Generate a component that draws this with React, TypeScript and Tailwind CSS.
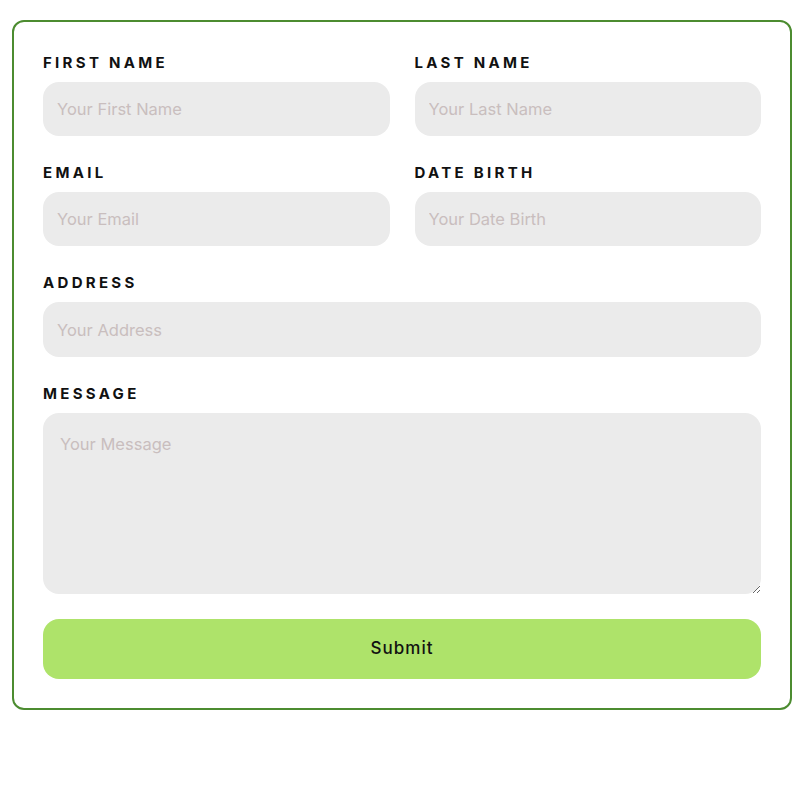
export default function App() {
  const labelCls =
    'block text-[15px] leading-5 font-bold tracking-[0.22em] uppercase text-[#111] mb-[9px]'
  const inputCls =
    'w-full h-[54px] rounded-2xl bg-[#ebebeb] px-[14px] text-[16.5px] text-[#333] outline-none placeholder:text-[#c9bebe]'

  return (
    <div className="min-h-[787px] bg-white px-3 pt-5 font-['Inter',sans-serif]">
      <form className="w-[780px] rounded-xl border-2 border-[#4c8c30] px-[29px] pt-[31px] pb-[29px]">
        <div className="grid grid-cols-2 gap-x-[25px] gap-y-[27px]">
          <div>
            <label className={labelCls}>First Name</label>
            <input className={inputCls} placeholder="Your First Name" />
          </div>
          <div>
            <label className={labelCls}>Last Name</label>
            <input className={inputCls} placeholder="Your Last Name" />
          </div>
          <div>
            <label className={labelCls}>Email</label>
            <input className={inputCls} placeholder="Your Email" />
          </div>
          <div>
            <label className={labelCls}>Date Birth</label>
            <input className={inputCls} placeholder="Your Date Birth" />
          </div>
          <div className="col-span-2">
            <label className={labelCls}>Address</label>
            <input className={inputCls + ' h-[55px]'} placeholder="Your Address" />
          </div>
          <div className="col-span-2">
            <label className={labelCls}>Message</label>
            <textarea
              className="block w-full h-[181px] rounded-2xl bg-[#ebebeb] px-[17px] py-[19px] text-[16.5px] text-[#333] outline-none placeholder:text-[#c9bebe]"
              placeholder="Your Message"
            />
          </div>
        </div>
        <button
          type="button"
          className="mt-[25px] block w-full h-[60px] rounded-2xl bg-[#aee36a] text-[17px] font-medium tracking-[0.06em] text-[#111]"
        >
          Submit
        </button>
      </form>
    </div>
  )
}
